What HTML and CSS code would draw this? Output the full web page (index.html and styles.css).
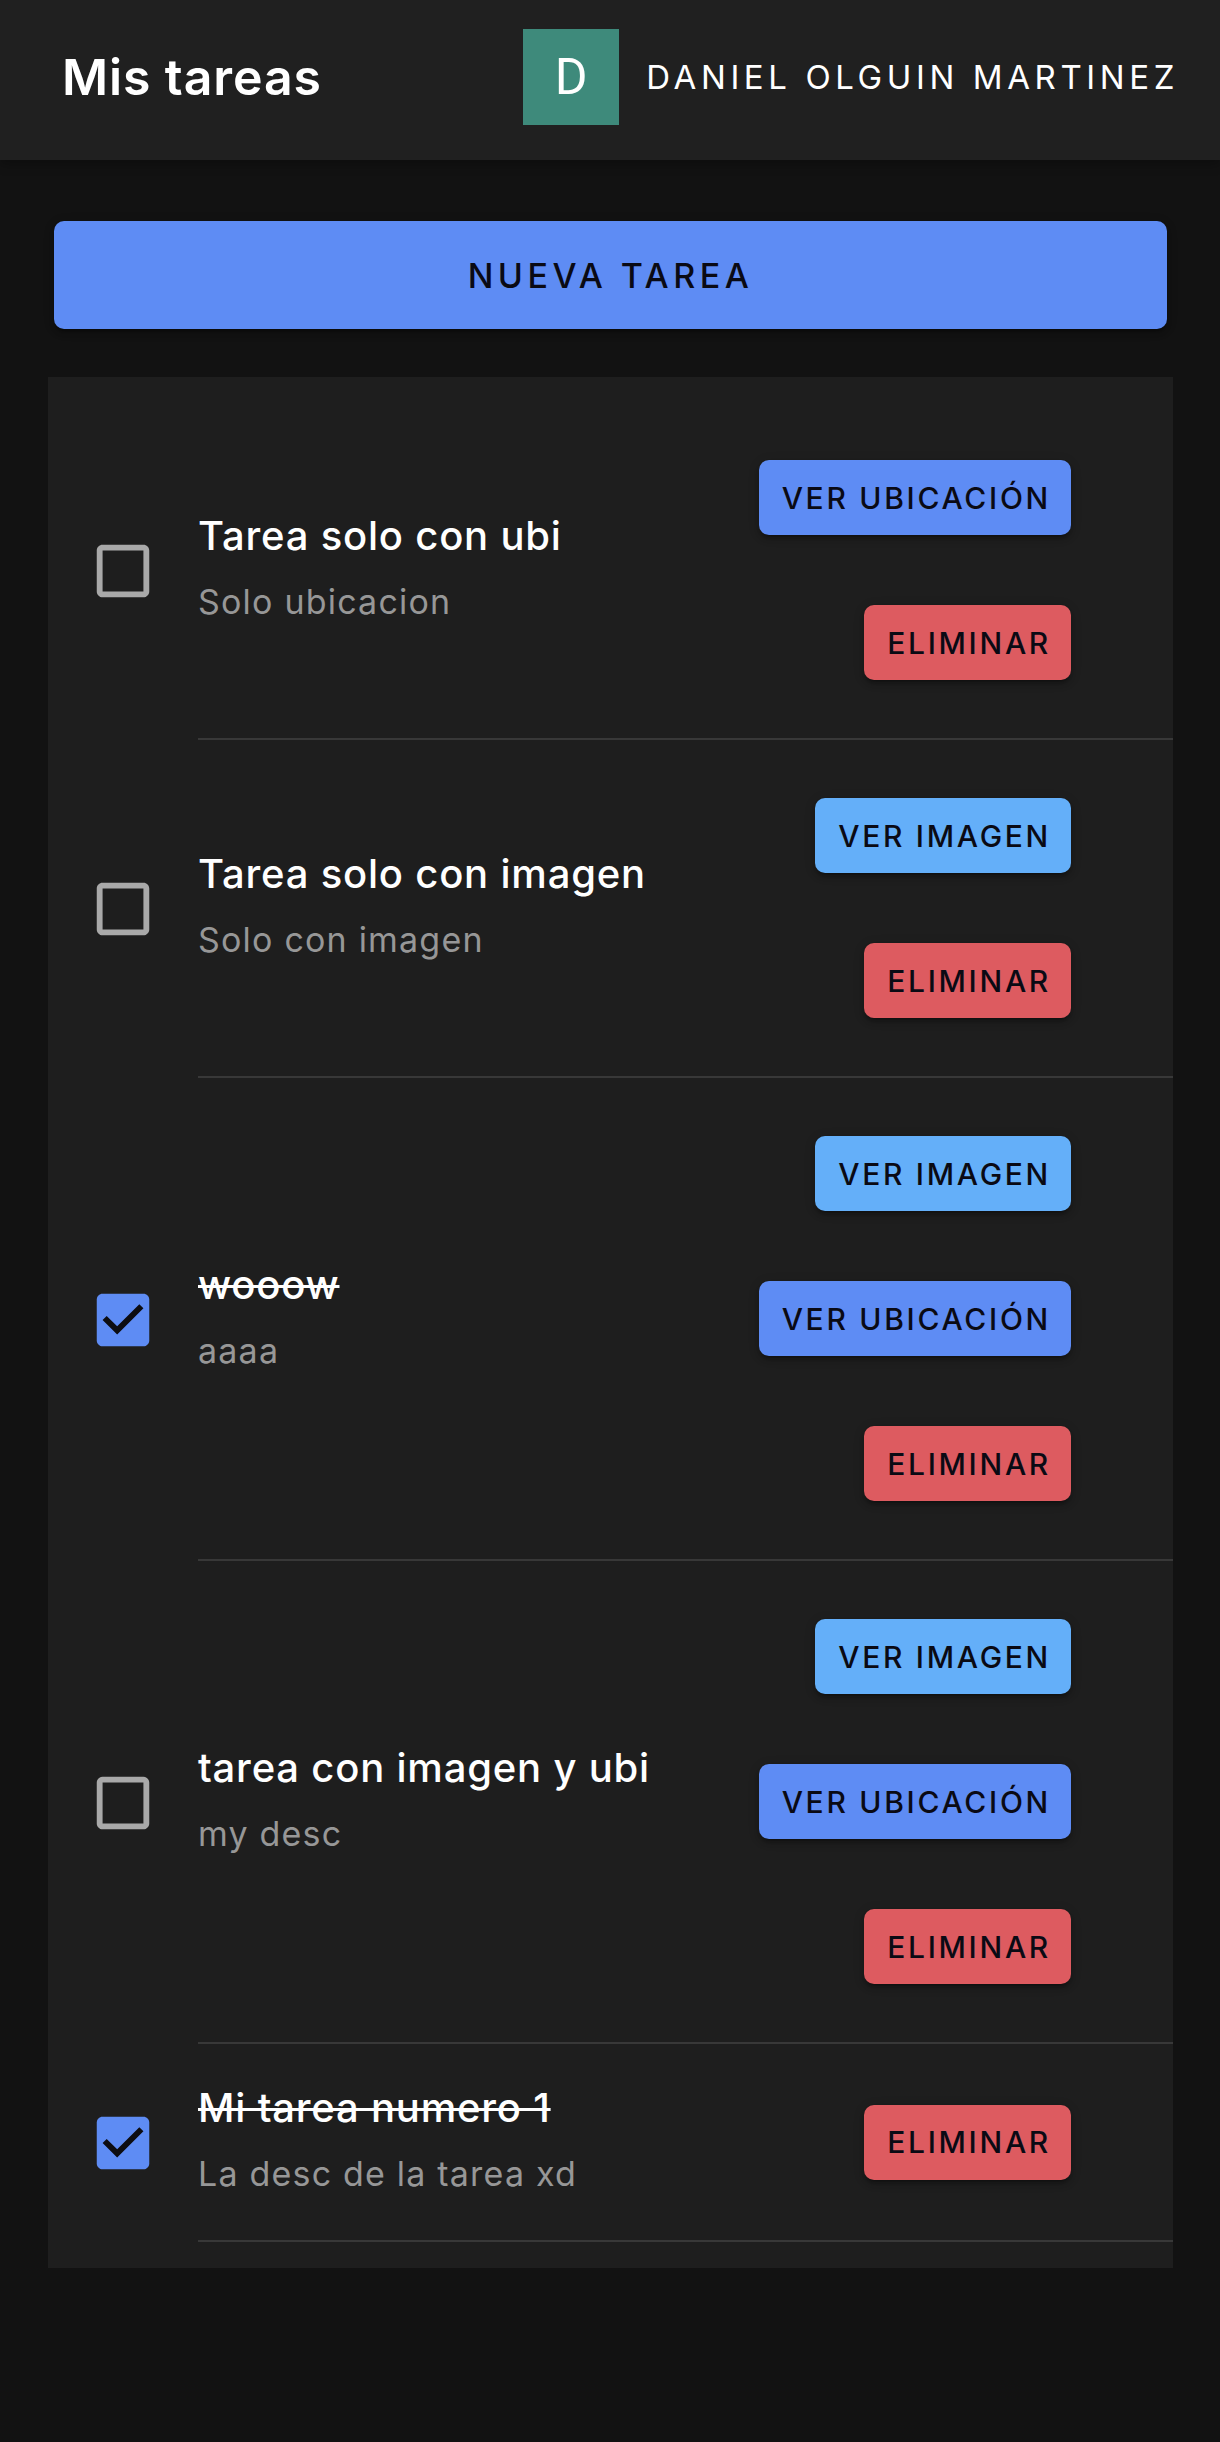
FILE: index.html
```html
<!DOCTYPE html>
<html lang="es">
<head>
<meta charset="utf-8">
<title>Mis tareas</title>
<link rel="stylesheet" href="styles.css">
</head>
<body>
<header class="appbar">
  <h1 class="app-title">Mis tareas</h1>
  <div class="user">
    <div class="avatar">D</div>
    <span class="user-name">Daniel Olguin Martinez</span>
  </div>
</header>

<main class="main">
  <button class="btn btn-new">Nueva tarea</button>

  <ul class="task-list">
    <li class="task">
      <div class="check-cell">
        <svg class="check" viewBox="0 0 24 24"><path class="box-outline" d="M19 5v14H5V5h14m0-2H5c-1.11 0-2 .9-2 2v14c0 1.1.89 2 2 2h14c1.11 0 2-.9 2-2V5c0-1.1-.89-2-2-2z"/></svg>
      </div>
      <div class="task-body">
        <div class="task-text">
          <div class="task-title">Tarea solo con ubi</div>
          <div class="task-desc">Solo ubicacion</div>
        </div>
        <div class="task-actions">
          <button class="btn btn-sm btn-ubi">Ver ubicación</button>
          <button class="btn btn-sm btn-del">Eliminar</button>
        </div>
      </div>
    </li>

    <li class="task">
      <div class="check-cell">
        <svg class="check" viewBox="0 0 24 24"><path class="box-outline" d="M19 5v14H5V5h14m0-2H5c-1.11 0-2 .9-2 2v14c0 1.1.89 2 2 2h14c1.11 0 2-.9 2-2V5c0-1.1-.89-2-2-2z"/></svg>
      </div>
      <div class="task-body">
        <div class="task-text">
          <div class="task-title">Tarea solo con imagen</div>
          <div class="task-desc">Solo con imagen</div>
        </div>
        <div class="task-actions">
          <button class="btn btn-sm btn-img">Ver imagen</button>
          <button class="btn btn-sm btn-del">Eliminar</button>
        </div>
      </div>
    </li>

    <li class="task">
      <div class="check-cell">
        <svg class="check" viewBox="0 0 24 24"><path class="box-fill" d="M19 3H5c-1.11 0-2 .9-2 2v14c0 1.1.89 2 2 2h14c1.11 0 2-.9 2-2V5c0-1.1-.89-2-2-2z"/><path class="tick" d="M10 17l-5-5 1.41-1.41L10 14.17l7.59-7.59L19 8l-9 9z"/></svg>
      </div>
      <div class="task-body">
        <div class="task-text">
          <div class="task-title done">wooow</div>
          <div class="task-desc">aaaa</div>
        </div>
        <div class="task-actions">
          <button class="btn btn-sm btn-img">Ver imagen</button>
          <button class="btn btn-sm btn-ubi">Ver ubicación</button>
          <button class="btn btn-sm btn-del">Eliminar</button>
        </div>
      </div>
    </li>

    <li class="task">
      <div class="check-cell">
        <svg class="check" viewBox="0 0 24 24"><path class="box-outline" d="M19 5v14H5V5h14m0-2H5c-1.11 0-2 .9-2 2v14c0 1.1.89 2 2 2h14c1.11 0 2-.9 2-2V5c0-1.1-.89-2-2-2z"/></svg>
      </div>
      <div class="task-body">
        <div class="task-text">
          <div class="task-title">tarea con imagen y ubi</div>
          <div class="task-desc">my desc</div>
        </div>
        <div class="task-actions">
          <button class="btn btn-sm btn-img">Ver imagen</button>
          <button class="btn btn-sm btn-ubi">Ver ubicación</button>
          <button class="btn btn-sm btn-del">Eliminar</button>
        </div>
      </div>
    </li>

    <li class="task">
      <div class="check-cell">
        <svg class="check" viewBox="0 0 24 24"><path class="box-fill" d="M19 3H5c-1.11 0-2 .9-2 2v14c0 1.1.89 2 2 2h14c1.11 0 2-.9 2-2V5c0-1.1-.89-2-2-2z"/><path class="tick" d="M10 17l-5-5 1.41-1.41L10 14.17l7.59-7.59L19 8l-9 9z"/></svg>
      </div>
      <div class="task-body">
        <div class="task-text">
          <div class="task-title done">Mi tarea numero 1</div>
          <div class="task-desc">La desc de la tarea xd</div>
        </div>
        <div class="task-actions">
          <button class="btn btn-sm btn-del">Eliminar</button>
        </div>
      </div>
    </li>
  </ul>
</main>
</body>
</html>
```

FILE: styles.css
```css
* { box-sizing: border-box; }

html, body {
  margin: 0;
  padding: 0;
  background: #121212;
  font-family: Inter, "Noto Sans", "Liberation Sans", sans-serif;
  color: #fff;
}

.appbar {
  height: 160px;
  background: #202020;
  display: flex;
  align-items: center;
  justify-content: space-between;
  padding: 0 41px 6px 62px;
  box-shadow: 0 5px 10px rgba(0,0,0,0.25);
  position: relative;
}

.app-title {
  margin: 0;
  font-size: 50px;
  font-weight: 600;
  letter-spacing: 0.9px;
  line-height: 1;
}

.user {
  display: flex;
  align-items: center;
  gap: 27px;
}

.avatar {
  width: 96px;
  height: 96px;
  background: #3e8a7b;
  display: flex;
  align-items: center;
  justify-content: center;
  font-family: Roboto, Inter, sans-serif;
  font-size: 50px;
  font-weight: 400;
  color: #fff;
}

.user-name {
  text-transform: uppercase;
  font-size: 33px;
  font-weight: 400;
  letter-spacing: 4.6px;
}

.main {
  padding: 61px 47px 0 48px;
}

.btn {
  border: none;
  font-family: Inter, "Noto Sans", sans-serif;
  text-transform: uppercase;
  color: #0a0a14;
  font-weight: 500;
  cursor: pointer;
  box-shadow: 0 5px 3px -4px rgba(0,0,0,0.3), 0 4px 5px 0 rgba(0,0,0,0.2), 0 2px 12px 0 rgba(0,0,0,0.14);
}

.btn-new {
  display: block;
  width: calc(100% - 12px);
  margin: 0 6px;
  height: 108px;
  border-radius: 10px;
  background: #5e8cf4;
  font-size: 34px;
  letter-spacing: 4.5px;
}

.task-list {
  list-style: none;
  margin: 48px 0 0;
  padding: 25px 0 26px;
  background: #1e1e1e;
}

.task {
  display: flex;
  align-items: center;
}

.check-cell {
  width: 150px;
  flex: none;
  padding-left: 40px;
  display: flex;
}

.check {
  width: 70px;
  height: 70px;
  display: block;
}

.box-outline { fill: #a9a9a9; }
.box-fill { fill: #5e8cf4; }
.tick { fill: #0d0d12; }

.task-body {
  flex: 1;
  display: flex;
  align-items: center;
  justify-content: space-between;
  padding: 19px 102px 19px 0;
  border-bottom: 2px solid #383838;
}

.task-text {
  margin: 15px 0;
  padding-bottom: 9px;
}

.task-title {
  font-size: 40px;
  line-height: 60px;
  font-weight: 500;
  letter-spacing: 0.8px;
  color: #fff;
}

.task-title.done {
  text-decoration: line-through;
  text-decoration-thickness: 3px;
}

.task-desc {
  margin-top: 13px;
  font-size: 34px;
  line-height: 46px;
  letter-spacing: 1.2px;
  color: #979797;
}

.task-actions {
  display: flex;
  flex-direction: column;
  align-items: flex-end;
  gap: 70px;
  padding: 39px 0;
}

.btn-sm {
  height: 75px;
  padding: 0 20px 0 23px;
  border-radius: 10px;
  font-size: 30px;
  letter-spacing: 2.7px;
}

.btn-ubi { background: #5e8cf4; }
.btn-img { background: #64aff9; }
.btn-del { background: #dd5b60; }
```
